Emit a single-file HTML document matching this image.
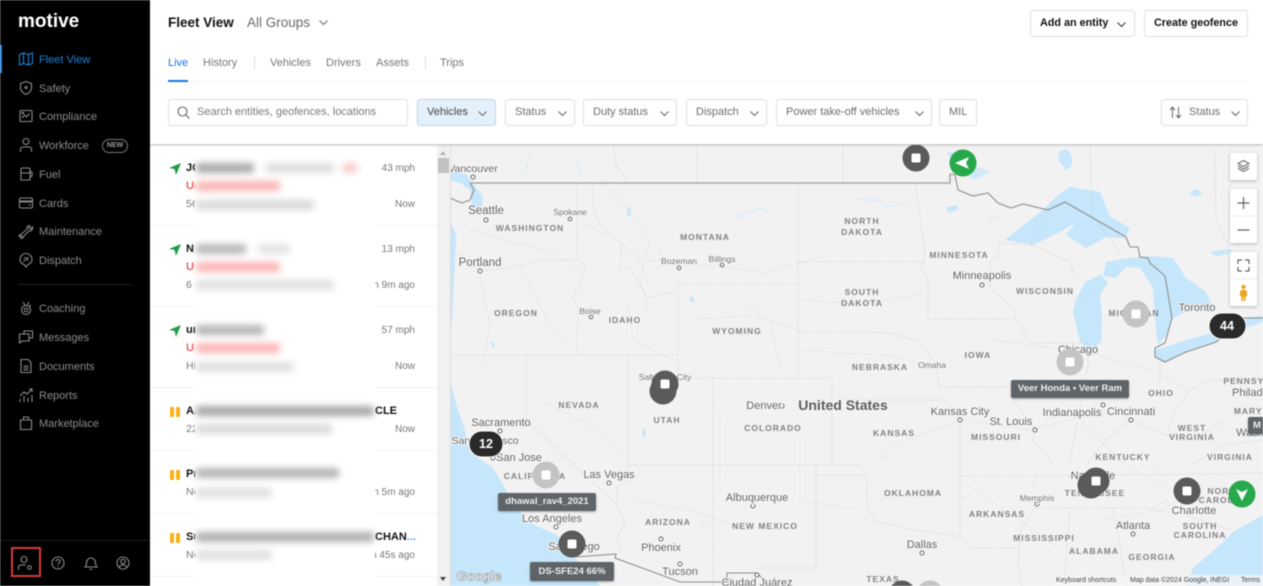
<!DOCTYPE html>
<html><head><meta charset="utf-8"><title>Fleet View</title>
<style>
html,body{margin:0;padding:0;width:1263px;height:586px;overflow:hidden;background:#fff;font-family:"Liberation Sans",sans-serif}
#wrap{position:absolute;left:0;top:0;width:1263px;height:586px;overflow:hidden;filter:blur(.4px)}
.a{position:absolute;white-space:nowrap}
#side{position:absolute;left:0;top:0;width:150px;height:586px;background:#000}
.n{position:absolute;left:39px;margin-top:1px;font-size:11px;line-height:14px;color:#8b8b8b;white-space:nowrap}
.ic{position:absolute;left:18px;width:16px;height:16px;fill:none;stroke:#8b8b8b;stroke-width:1.1}
.btn{position:absolute;top:99px;height:25px;border:1px solid #dcdcdc;border-radius:3px;background:#fff;font-size:11px;line-height:25px;color:#6e6e6e;box-sizing:content-box}
.btn span{position:absolute;left:9px;white-space:nowrap}
.chev{position:absolute;width:9px;height:6px;fill:none;stroke:#666;stroke-width:1}
.tab{position:absolute;top:56px;font-size:11px;line-height:14px;color:#777}
.sep{position:absolute;top:56px;width:1px;height:14px;background:#ddd}
.rs{position:absolute;left:150px;width:287px;height:1px;background:#f2f2f2}
.t{position:absolute;font-size:10.5px;line-height:13px;color:#777;white-space:nowrap}
.b{position:absolute;margin-top:1px;font-size:11px;line-height:13px;font-weight:bold;color:#111;white-space:nowrap}
.r{position:absolute;font-size:11px;line-height:13px;color:#f01818;white-space:nowrap}
.tr{position:absolute;right:848px;font-size:10px;line-height:13px;color:#777;white-space:nowrap}
.bl{position:absolute;height:10px;border-radius:3px;filter:blur(3.5px)}
.p{position:absolute;width:4px;height:10px;background:#fbb017;border-radius:1px}
.arr{position:absolute;left:168px;width:14px;height:14px}
#map text{font-family:"Liberation Sans",sans-serif;dominant-baseline:central;text-anchor:middle}
.c{font-size:11px;fill:#666;paint-order:stroke;stroke:#f6f6f6;stroke-width:2px}
.cs{font-size:8.5px;fill:#747474;paint-order:stroke;stroke:#f6f6f6;stroke-width:2px}
.s{font-size:8.5px;font-weight:bold;fill:#828282;letter-spacing:1px}
.ctl{position:absolute;left:1230px;width:27px;background:#fff;border-radius:2px;box-shadow:0 1px 3px rgba(0,0,0,.25)}
.lb{position:absolute;height:18px;line-height:18px;background:#5f6468;border-radius:2px;color:#eee;font-size:9.5px;font-weight:bold;text-align:center;white-space:nowrap;box-shadow:0 1px 2px rgba(0,0,0,.3)}
</style></head><body><div id="wrap">

<svg id="map" style="position:absolute;left:450px;top:145px" width="813" height="441" viewBox="450 145 813 441">
<rect x="450" y="145" width="813" height="441" fill="#f2f2f2"/>
<g fill="#c5e6fb">
<path d="M450 586V380L458 410 465 430 470 452 493 468 507 492 527 522 557 535 573 557 588 570 600 586Z"/>
<path d="M450 220L456 235 455 260 452 320 450 345Z"/>
<path d="M450 172L466 174 472 183 482 195 483 204 476 214 472 205 470 190 462 184 450 180Z"/>
<path d="M1263 515L1233 532 1220 545 1193 568 1186 586H1263Z"/>
<path d="M1005 240L1020 228 1043 210 1058 195 1070 187 1100 192 1110 217 1130 228 1125 238 1106 237 1086 248 1066 235 1075 223 1060 232 1033 245 1023 243Z"/>
<path d="M1100 275L1085 282 1076 300 1073 312 1080 342 1090 352 1101 342 1102 315 1100 295 1108 282 1100 275Z"/>
<path d="M1106 262L1130 258 1150 256 1173 258 1186 278 1206 292 1213 308 1186 312 1173 318 1166 335 1158 345 1155 320 1153 288 1140 268 1126 267 1116 278 1103 276Z"/>
<path d="M1155 358L1166 362 1186 352 1216 342 1222 334 1212 333 1186 340 1168 346 1155 350Z"/>
<path d="M1216 332L1240 318 1263 316V322L1240 330 1220 338Z"/>
<path d="M962 172L975 180 990 172 972 165Z" opacity=".7"/><path d="M1060 162C1056 155 1060 148 1068 150 1074 158 1074 166 1066 170Z"/>
<path d="M1190 192l8 -3 4 5-8 3z"/><path d="M1210 252l20-3 4 4-18 3z"/><path d="M947 153l6-1 2 4-6 1z"/>
<path d="M946 208l10-3 3 4-10 4z"/><path d="M560 212l1-4 1 6z"/><path d="M627 207l3 0 1 9-4 0z"/>
<path d="M690 296l4 2 1 5-5-2z"/><path d="M643 429l3 0 -1 8-3 0z"/><path d="M491 341l3 2 1 5-3-2z"/>
</g>
<g fill="none" stroke="#d2ecfb" stroke-width="1">
<path d="M530 155l-5 18M577 160l3 16M855 200l18-3 15 10 12-2M735 218l25-10 8 5M660 250l4 12M1000 215l-12 6"/>
<path d="M1090 480l3-8M1150 470l5-5M1050 500l4-6M880 460l6-5M960 500l6-4M700 525l8-4M560 520l4 6"/>
</g>
<g fill="none" stroke="#e9e9e9" stroke-width="1">
<path d="M470 230l40 12 30 6 40 20M578 220l30 15 30 20 10 30M600 180l30 30 20 30-10 40 8 30M648 260l60 5 60 8 30-10 30-8"/>
<path d="M480 275l10 50-8 40M520 265l25 50 20 30M540 400l60 30 40 40M628 300l5 40 40 20M690 320l60-5 50 15M740 300l30 20 10 50"/>
<path d="M800 300l60 4 65-10M800 350l90 6 50 12M860 200l60 4M990 340l80 10M1080 350l70 20 40 20M960 420l70 10 60-15 50-5"/>
<path d="M720 420l0 60M800 440l0 60 60 10M630 500l60 10 60 20M880 450l80-30M960 480l60 40 40 30M1100 520l60-10 40-20M1060 400l60 60 50 30"/>
</g>
<g fill="none" stroke="#cbcbcb" stroke-width="1" stroke-dasharray="1 2">
<path d="M697 145V183M843 145V183M613 145L616 165 627 180M1215 150L1216 220 1230 250"/>
<path d="M577 183V252L579 260 586 268 573 298 578 308 577 355M457 253L480 271 507 268 543 260 579 260"/>
<path d="M593 183V208L600 225 622 243 620 268 630 268 647 298 673 292 678 295M678 284H798M678 284V378M798 183V375"/>
<path d="M453 355H678M526 355V420L617 505 625 522 617 538 620 553M628 355V480L617 487V505M628 465H860M688 378H832V465M713 378V586"/>
<path d="M816 465V568H755M816 475H867V508L878 522 916 530 963 537 970 548H1018M798 262H925M798 332H853L890 333 920 342 935 363 940 387 H1013"/>
<path d="M915 183L925 252 921 270 928 278V319H1016M846 400H946L960 420V535M960 476H1036L1033 485M1048 210L1031 245 1000 243 998 255 990 262V288L1013 308 1016 319 1030 342V343H1088"/>
<path d="M1031 245L1070 262 1076 278M1013 387V398L1035 430 1033 440 1048 457 1053 465M1088 343V365L1084 385 1080 408 1070 462M1088 462L1106 440 1130 420 1166 435M1166 435L1175 410 1190 390 1200 385 1214 380H1263M1160 353V385"/>
<path d="M1036 476L1263 473M1036 508H1153L1168 500M1070 508L1065 578M1113 508L1123 565 1125 586M1036 505L1020 532 1018 565 1022 586M1151 510L1182 514 1231 530M1166 435L1195 440 1210 430 1225 420M1190 465L1225 445 1263 440"/>
<path d="M1090 145l2 70 30 40M1230 145V230l12 20"/>
</g>
<g fill="none" stroke="#8e8e8e" stroke-width="1.1">
<path d="M450 198L462 203 470 200 474 190 470 183"/>
<path d="M1155 348L1165 343 1172 318 1165 276 1150 263 1148 258 1140 257 1138 247 1130 247 1126 237 1065 202 1048 210 1023 204 1011 208 998 203 988 193 973 196 958 190 955 175 950 174"/>
<path d="M1155 348V357L1165 362 1186 352 1216 342 1230 330 1243 318H1263"/>
<path d="M575 557L616 554 615 558 680 582H727V573H757L770 586"/>
</g>
<path d="M470 183H950V174" fill="none" stroke="#a8a8a8" stroke-width="1.6"/>
<g fill="#fff" stroke="#666" stroke-width="1">
<circle cx="473" cy="177" r="2"/><circle cx="486" cy="220" r="2"/><circle cx="570" cy="219" r="1.8"/><circle cx="480" cy="271" r="2"/><circle cx="679" cy="268" r="1.8"/><circle cx="722" cy="265" r="1.8"/><circle cx="591" cy="317" r="1.8"/><circle cx="982" cy="285" r="2"/><circle cx="500" cy="431" r="2"/><circle cx="493" cy="458" r="2"/><circle cx="609" cy="483" r="2"/><circle cx="556" cy="527" r="2"/><circle cx="782" cy="406" r="2"/><circle cx="753" cy="506" r="2"/><circle cx="661" cy="539" r="2"/><circle cx="680" cy="564" r="2"/><circle cx="757" cy="575" r="2"/><circle cx="960" cy="420" r="2"/><circle cx="1035" cy="430" r="2"/><circle cx="1103" cy="405" r="2"/><circle cx="1131" cy="420" r="2"/><circle cx="1037" cy="504" r="2"/><circle cx="1133" cy="534" r="2"/><circle cx="922" cy="553" r="2"/>
</g>
<g class="labels">
<text class="c" x="473" y="169" style="font-size:10.5px">Vancouver</text><text class="c" x="486" y="211" style="font-size:11.5px">Seattle</text><text class="s" x="530" y="228">WASHINGTON</text><text class="cs" x="570" y="212">Spokane</text><text class="c" x="480" y="263" style="font-size:11.5px">Portland</text>
<text class="s" x="705" y="237">MONTANA</text><text class="cs" x="679" y="261">Bozeman</text><text class="cs" x="722" y="259">Billings</text><text class="s" x="516" y="313">OREGON</text><text class="cs" x="590" y="311">Boise</text><text class="s" x="625" y="320">IDAHO</text><text class="s" x="737" y="331">WYOMING</text>
<text class="s" x="862" y="221">NORTH</text><text class="s" x="862" y="232">DAKOTA</text><text class="s" x="862" y="292">SOUTH</text><text class="s" x="862" y="303">DAKOTA</text><text class="s" x="959" y="255">MINNESOTA</text><text class="c" x="982" y="276">Minneapolis</text><text class="s" x="1045" y="291">WISCONSIN</text><text class="s" x="1134" y="313">MICHIGAN</text><text class="s" x="978" y="355">IOWA</text><text class="c" x="1197" y="308">Toronto</text><text class="c" x="1078" y="350">Chicago</text><text class="cs" x="932" y="365">Omaha</text><text class="s" x="880" y="367">NEBRASKA</text>
<text class="cs" x="665" y="377">Salt Lake City</text><text class="s" x="579" y="405">NEVADA</text><text class="c" x="501" y="423">Sacramento</text><text class="c" x="485" y="441" style="font-size:10.5px">San Francisco</text><text class="c" x="519" y="458">San Jose</text><text class="s" x="535" y="476">CALIFORNIA</text><text class="c" x="609" y="475">Las Vegas</text><text class="c" x="552" y="519">Los Angeles</text><text class="c" x="574" y="547">San Diego</text><text class="s" x="667" y="420">UTAH</text><text class="c" x="764" y="406">Denver</text><text x="843" y="405" style="font-size:14px;font-weight:bold;fill:#5f5f5f">United States</text><text class="s" x="773" y="428">COLORADO</text><text class="s" x="668" y="522">ARIZONA</text><text class="s" x="765" y="526">NEW MEXICO</text><text class="c" x="757" y="498">Albuquerque</text><text class="c" x="661" y="548">Phoenix</text><text class="c" x="680" y="572">Tucson</text><text class="c" x="757" y="583">Ciudad Juárez</text>
<text class="s" x="894" y="433">KANSAS</text><text class="c" x="960" y="412">Kansas City</text><text class="c" x="1011" y="422">St. Louis</text><text class="s" x="996" y="437">MISSOURI</text><text class="s" x="1161" y="393">OHIO</text><text class="c" x="1072" y="413">Indianapolis</text><text class="c" x="1131" y="412">Cincinnati</text><text class="s" x="1262" y="381">PENNSYLVANIA</text><text class="c" x="1262" y="393">Philadelphia</text><text class="s" x="1262" y="411">MARYLAND</text><text class="s" x="1192" y="428">WEST</text><text class="s" x="1192" y="437">VIRGINIA</text><text class="c" x="1265" y="433">Washington</text><text class="s" x="1123" y="457">KENTUCKY</text><text class="s" x="1230" y="457">VIRGINIA</text><text class="c" x="1093" y="476">Nashville</text><text class="s" x="1095" y="493">TENNESSEE</text><text class="s" x="1225" y="491">NORTH</text><text class="s" x="1225" y="500">CAROLINA</text><text class="cs" x="1037" y="498">Memphis</text><text class="s" x="997" y="514">ARKANSAS</text><text class="c" x="1194" y="511">Charlotte</text><text class="s" x="1200" y="526">SOUTH</text><text class="s" x="1200" y="535">CAROLINA</text><text class="c" x="1133" y="526">Atlanta</text><text class="s" x="913" y="493">OKLAHOMA</text><text class="s" x="1044" y="538">MISSISSIPPI</text><text class="s" x="1094" y="551">ALABAMA</text><text class="s" x="1152" y="557">GEORGIA</text><text class="c" x="922" y="545">Dallas</text><text class="s" x="883" y="579">TEXAS</text>
</g>
<g>
<circle cx="916" cy="158" r="13.5" fill="#5a5a5a"/><rect x="911.5" y="153.5" width="9" height="9" rx="1.5" fill="#fff"/>
<circle cx="1136" cy="314" r="13.5" fill="#c4c4c4"/><rect x="1131.5" y="309.5" width="9" height="9" rx="1.5" fill="#fff"/>
<circle cx="1070" cy="362" r="13.5" fill="#c4c4c4"/><rect x="1065.5" y="357.5" width="9" height="9" rx="1.5" fill="#fff"/>
<circle cx="663" cy="391" r="13.5" fill="#5a5a5a"/><circle cx="665" cy="384" r="13.5" fill="#5a5a5a"/><rect x="660.5" y="379.5" width="9" height="9" rx="1.5" fill="#fff"/>
<circle cx="546" cy="475" r="13.5" fill="#c4c4c4"/><rect x="541.5" y="470.5" width="9" height="9" rx="1.5" fill="#fff"/>
<circle cx="572" cy="544" r="13.5" fill="#5a5a5a"/><rect x="567.5" y="539.5" width="9" height="9" rx="1.5" fill="#fff"/>
<circle cx="1091" cy="485" r="13.5" fill="#5a5a5a"/><circle cx="1096" cy="481" r="13.5" fill="#5a5a5a"/><rect x="1091.5" y="476.5" width="9" height="9" rx="1.5" fill="#fff"/>
<circle cx="1187" cy="491" r="13.5" fill="#5a5a5a"/><rect x="1182.5" y="486.5" width="9" height="9" rx="1.5" fill="#fff"/>
<circle cx="902" cy="594" r="13.5" fill="#5a5a5a"/><circle cx="930" cy="594" r="13.5" fill="#c4c4c4"/>
<circle cx="963" cy="163" r="13.5" fill="#27a84a"/><path d="M955 163L969 157 966 163 969 169Z" fill="#fff"/>
<circle cx="1242" cy="494" r="13.5" fill="#27a84a"/><path d="M1236 489L1242 492 1248 489 1242 501Z" fill="#fff"/>
<rect x="469" y="431" width="34" height="26" rx="13" fill="#2a2a2a" stroke="#fff" stroke-width="1"/><text x="486" y="444" style="font-size:12.5px;font-weight:bold;fill:#fff">12</text>
<rect x="1209" y="313" width="37" height="26" rx="13" fill="#2a2a2a" stroke="#fff" stroke-width="1"/><text x="1227" y="326" style="font-size:12.5px;font-weight:bold;fill:#fff">44</text>
<text x="479" y="576" style="font-size:13px;font-weight:bold;fill:#fff;stroke:#9a9a9a;stroke-width:.7px">Google</text>
</g>
</svg>

<div class="lb" style="left:1011px;top:380px;width:118px">Veer Honda • Veer Ram</div>
<div class="lb" style="left:498px;top:493px;width:98px">dhawal_rav4_2021</div>
<div class="lb" style="left:530px;top:562px;width:84px;height:19px;line-height:19px">DS-SFE24 66%</div>
<div class="lb" style="left:1248px;top:417px;width:20px;height:17px;line-height:17px;text-align:left;padding-left:5px;box-sizing:border-box">M</div>

<div class="ctl" style="top:153px;height:27px"><svg width="27" height="27" fill="none" stroke="#666" stroke-width="1"><path d="M13.5 7.5l5.5 3-5.5 3-5.5-3zM8 13l5.500 3 5.500-3M8 15.500l5.500 3 5.500-3"/></svg></div>
<div class="ctl" style="top:189px;height:54px"><svg width="27" height="54" fill="none" stroke="#666" stroke-width="1.2"><path d="M7.500 14h12M13.500 8v12M7.500 41h12"/><path d="M0 27h27" stroke="#eee" stroke-width="1"/></svg></div>
<div class="ctl" style="top:252px;height:54px"><svg width="27" height="54" fill="none" stroke="#666" stroke-width="1.2"><path d="M8 12V8h4M15 8h4v4M19 15v4h-4M12 19H8v-4"/><path d="M0 27h27" stroke="#eee" stroke-width="1"/><g fill="#e9a623" stroke="none"><circle cx="13.500" cy="35" r="2.200"/><path d="M10.500 38h6l.8 6h-1.600v5h-1.800v-4h-.8v4h-1.800v-5h-1.600z"/></g></svg></div>

<div class="a" style="left:1053px;top:575px;width:210px;height:11px;background:rgba(245,245,245,.75);font-size:7px;line-height:11px;color:#444">
<span class="a" style="left:3px">Keyboard shortcuts</span><span class="a" style="left:77px">Map data ©2024 Google, INEGI</span><span class="a" style="left:188px">Terms</span></div>

<!-- list -->
<div class="a" style="left:150px;top:145px;width:300px;height:441px;background:#fff"></div>
<div class="rs" style="top:225px"></div><div class="rs" style="top:306px"></div><div class="rs" style="top:387px"></div><div class="rs" style="top:450px"></div><div class="rs" style="top:513px"></div><div class="rs" style="top:576px"></div>
<div class="a" style="left:437px;top:145px;width:13px;height:441px;background:#f1f1f1"></div>
<div class="a" style="left:438px;top:158px;width:11px;height:15px;background:#c1c1c1"></div>
<div class="a" style="left:440px;top:151px;border:3.500px solid transparent;border-bottom:4px solid #b0b0b0;border-top:0"></div>
<div class="a" style="left:440px;top:577px;border:3.500px solid transparent;border-top:4px solid #444;border-bottom:0"></div>
<div class="a" style="left:450px;top:145px;width:1px;height:441px;background:#ddd"></div>

<svg class="arr" style="top:161px" viewBox="168 161 14 14"><path d="M169 168L181 163 176 175 174.500 169Z" fill="#1f9d46"/></svg>
<svg class="arr" style="top:242px" viewBox="168 161 14 14"><path d="M169 168L181 163 176 175 174.500 169Z" fill="#1f9d46"/></svg>
<svg class="arr" style="top:323px" viewBox="168 161 14 14"><path d="M169 168L181 163 176 175 174.500 169Z" fill="#1f9d46"/></svg>
<div class="p" style="left:170px;top:407px"></div><div class="p" style="left:176px;top:407px"></div>
<div class="p" style="left:170px;top:470px"></div><div class="p" style="left:176px;top:470px"></div>
<div class="p" style="left:170px;top:533px"></div><div class="p" style="left:176px;top:533px"></div>

<div class="b" style="left:186px;top:161px">JO</div><div class="r" style="left:186px;top:180px">Un</div><div class="t" style="left:186px;top:198px">56</div>
<div class="b" style="left:186px;top:242px">N</div><div class="r" style="left:186px;top:261px">U</div><div class="t" style="left:186px;top:279px">6</div>
<div class="b" style="left:186px;top:323px">un</div><div class="r" style="left:186px;top:342px">U</div><div class="t" style="left:186px;top:360px">Hi</div>
<div class="b" style="left:186px;top:404px">AA</div><div class="t" style="left:186px;top:423px">22</div>
<div class="b" style="left:186px;top:467px">Pr</div><div class="t" style="left:186px;top:486px">No</div>
<div class="b" style="left:186px;top:530px">Su</div><div class="t" style="left:186px;top:549px">No</div>
<div class="tr" style="top:162px">43 mph</div><div class="tr" style="top:198px">Now</div>
<div class="tr" style="top:243px">13 mph</div><div class="tr" style="top:279px">h 9m ago</div>
<div class="tr" style="top:324px">57 mph</div><div class="tr" style="top:360px">Now</div>
<div class="tr" style="top:423px">Now</div><div class="tr" style="top:486px">h 5m ago</div><div class="tr" style="top:549px">n 45s ago</div>

<div class="a" style="left:195px;top:145px;width:180px;height:441px;background:#fff"></div>
<div class="b" style="left:375px;top:404px">CLE</div>
<div class="b" style="left:375px;top:530px">CHAN<span style="color:#5aa5ea">...</span></div>
<div class="bl" style="left:196px;top:163px;width:58px;background:#aaa"></div><div class="bl" style="left:266px;top:163px;width:68px;background:#dedede"></div><div class="bl" style="left:343px;top:163px;width:14px;background:#f9cccc"></div>
<div class="bl" style="left:196px;top:181px;width:84px;background:#fbb5b5"></div><div class="bl" style="left:196px;top:200px;width:118px;background:#dadada"></div>
<div class="bl" style="left:196px;top:244px;width:50px;background:#b8b8b8"></div><div class="bl" style="left:258px;top:244px;width:32px;background:#e4e4e4"></div>
<div class="bl" style="left:196px;top:262px;width:84px;background:#fbb5b5"></div><div class="bl" style="left:196px;top:280px;width:138px;background:#e0e0e0"></div>
<div class="bl" style="left:196px;top:325px;width:68px;background:#b5b5b5"></div><div class="bl" style="left:196px;top:343px;width:84px;background:#fbb5b5"></div><div class="bl" style="left:196px;top:362px;width:98px;background:#e0e0e0"></div>
<div class="bl" style="left:196px;top:406px;width:178px;background:#a8a8a8"></div><div class="bl" style="left:196px;top:424px;width:136px;background:#dadada"></div>
<div class="bl" style="left:196px;top:468px;width:143px;background:#b5b5b5"></div><div class="bl" style="left:196px;top:488px;width:76px;background:#e0e0e0"></div>
<div class="bl" style="left:196px;top:532px;width:178px;background:#b0b0b0"></div><div class="bl" style="left:196px;top:550px;width:76px;background:#e0e0e0"></div>

<!-- header -->
<div class="a" style="left:150px;top:0;width:1113px;height:144px;background:#fff;box-shadow:0 1px 2px rgba(0,0,0,.3)"></div>
<div class="a" style="left:168px;top:15px;font-size:13.500px;line-height:16px;font-weight:bold;color:#111">Fleet View</div>
<div class="a" style="left:247px;top:15px;font-size:13.500px;line-height:16px;color:#6a6a6a">All Groups</div>
<svg class="chev" style="left:319px;top:20px"><path d="M.5 .5L4.500 4.500 8.500 .5"/></svg>
<div class="tab" style="left:168px;color:#1a73e8">Live</div><div class="tab" style="left:203px">History</div><div class="sep" style="left:254px"></div>
<div class="tab" style="left:270px">Vehicles</div><div class="tab" style="left:326px">Drivers</div><div class="tab" style="left:376px">Assets</div><div class="sep" style="left:425px"></div><div class="tab" style="left:440px">Trips</div>
<div class="a" style="left:168px;top:80.500px;width:1080px;height:1.500px;background:#f0f0f0"></div>
<div class="a" style="left:168px;top:79.500px;width:20px;height:2px;background:#1a73e8"></div>

<div class="btn" style="left:168px;width:238px"><span style="left:28px;color:#7a7a7a">Search entities, geofences, locations</span>
<svg style="position:absolute;left:8px;top:6px" width="13" height="13" fill="none" stroke="#666" stroke-width="1.100"><circle cx="5.500" cy="5.500" r="4.500"/><path d="M9 9l3.500 3.500"/></svg></div>
<div class="btn" style="left:417px;width:77px;background:#e4f1fb;border-color:#bcd5e6"><span style="color:#444">Vehicles</span><svg class="chev" style="left:60px;top:11px"><path d="M.5 .5L4.500 4.500 8.500 .5"/></svg></div>
<div class="btn" style="left:505px;width:68px"><span>Status</span><svg class="chev" style="left:52px;top:11px"><path d="M.5 .5L4.500 4.500 8.500 .5"/></svg></div>
<div class="btn" style="left:583px;width:92px"><span>Duty status</span><svg class="chev" style="left:76px;top:11px"><path d="M.5 .5L4.500 4.500 8.500 .5"/></svg></div>
<div class="btn" style="left:686px;width:79px"><span>Dispatch</span><svg class="chev" style="left:63px;top:11px"><path d="M.5 .5L4.500 4.500 8.500 .5"/></svg></div>
<div class="btn" style="left:776px;width:154px"><span>Power take-off vehicles</span><svg class="chev" style="left:138px;top:11px"><path d="M.5 .5L4.500 4.500 8.500 .5"/></svg></div>
<div class="btn" style="left:939px;width:36px"><span>MIL</span></div>
<div class="btn" style="left:1161px;width:85px"><svg style="position:absolute;left:7px;top:6px" width="13" height="13" fill="none" stroke="#666" stroke-width="1"><path d="M3.500 12V1.500M1 4l2.500-3L6 4M9.500 1v10.500M7 9l2.500 3L12 9"/></svg><span style="left:27px">Status</span><svg class="chev" style="left:69px;top:11px"><path d="M.5 .5L4.500 4.500 8.500 .5"/></svg></div>
<div class="btn" style="left:1030px;top:10px;width:103px;color:#111;font-weight:bold;font-size:10.800px"><span>Add an entity</span><svg class="chev" style="left:86px;top:11px;stroke:#333"><path d="M.5 .5L4.500 4.500 8.500 .5"/></svg></div>
<div class="btn" style="left:1144px;top:10px;width:102px;color:#111;font-weight:bold;font-size:10.800px"><span>Create geofence</span></div>

<!-- sidebar -->
<div id="side">
<div class="a" style="left:18px;top:11px;font-size:19px;line-height:22px;font-weight:bold;color:#fff">motive</div>
<div class="a" style="left:0;top:45px;width:2px;height:28px;background:#1b80dc"></div>

<svg class="ic" style="top:51px;stroke:#1b80dc" viewBox="0 0 16 16"><path d="M1.500 3.500l4-1.500 5 1.500 4-1.500v10.500l-4 1.500-5-1.500-4 1.500zM5.500 2v10.500M10.500 3.500v10"/></svg>
<div class="n" style="top:52px;color:#1b80dc">Fleet View</div>
<svg class="ic" style="top:80px" viewBox="0 0 16 16"><path d="M8 1.500l5.500 2v4.500c0 3-2.500 5-5.500 6.500-3-1.500-5.500-3.500-5.500-6.500V3.500z"/><circle cx="8" cy="7.500" r="1"/></svg>
<div class="n" style="top:81px">Safety</div>
<svg class="ic" style="top:108px" viewBox="0 0 16 16"><rect x="2" y="2.500" width="12" height="11" rx="1"/><path d="M4 10l2.500-3 2 2 3-3.500"/><rect x="3.500" y="4" width="2.500" height="2" fill="#8b8b8b" stroke="none"/></svg>
<div class="n" style="top:109px">Compliance</div>
<svg class="ic" style="top:137px" viewBox="0 0 16 16"><circle cx="8" cy="4.500" r="3"/><path d="M2.500 15v-2.500c0-1.500 1-2.500 2.500-2.500h6c1.500 0 2.500 1 2.500 2.500V15"/></svg>
<div class="n" style="top:138px">Workforce</div>
<div class="a" style="left:102px;top:139px;width:24px;height:12px;border:1px solid #777;border-radius:7px;color:#999;font-size:7px;font-weight:bold;line-height:12px;text-align:center">NEW</div>
<svg class="ic" style="top:166px" viewBox="0 0 16 16"><path d="M3 14V3.500C3 2.500 3.500 2 4.500 2h6c1 0 1.500.5 1.500 1.500V14zM3 7h9M12 5l2 1.500V10l-2 1"/></svg>
<div class="n" style="top:167px">Fuel</div>
<svg class="ic" style="top:195px" viewBox="0 0 16 16"><rect x="1.500" y="3" width="13" height="10" rx="1.500"/><path d="M1.500 6.500h13" stroke-width="2"/><path d="M10.500 10h2"/></svg>
<div class="n" style="top:196px">Cards</div>
<svg class="ic" style="top:224px" viewBox="0 0 16 16"><path d="M14.500 3l-2 2-1.500-1 1-2.200C10 1 8.500 3 9.200 5L3 10.500c-1.500 0-2 1-1.800 2l1.800-1 1 1.300-1.300 1.400c1.500.5 3-.5 3-2L11 7c2 .5 4-1.500 3.500-4z"/></svg>
<div class="n" style="top:224px">Maintenance</div>
<svg class="ic" style="top:252px" viewBox="0 0 16 16"><path d="M8 15l-2-2.500C3.500 11.500 2 9.500 2 7.500a6 6 0 0 1 12 0c0 2-1.500 4-4 5z"/><path d="M5.500 9.500L10.500 5M6 5.500l2 .5M10 9l-.5-2"/></svg>
<div class="n" style="top:253px">Dispatch</div>
<div class="a" style="left:18px;top:284px;width:114px;height:1px;background:#222"></div>
<svg class="ic" style="top:300px" viewBox="0 0 16 16"><circle cx="8" cy="10" r="4.500"/><circle cx="8" cy="10" r="1.800"/><path d="M5 2l2.500 4M9 5l2-3M11 6l2-1"/></svg>
<div class="n" style="top:301px">Coaching</div>
<svg class="ic" style="top:329px" viewBox="0 0 16 16"><path d="M6 5V2h8.500v7H11M1.500 5H11v7H4l-2.500 2z"/></svg>
<div class="n" style="top:330px">Messages</div>
<svg class="ic" style="top:358px" viewBox="0 0 16 16"><path d="M3 1.500h7l3 3v10H3zM5.500 8h5M5.500 10h5M5.500 12h5"/></svg>
<div class="n" style="top:359px">Documents</div>
<svg class="ic" style="top:387px" viewBox="0 0 16 16"><path d="M2 15v-3M6 15V9M10 15v-4M14 15V8M2 9l4-4 3 2 5-5M11 2h3v3"/></svg>
<div class="n" style="top:388px">Reports</div>
<svg class="ic" style="top:415px" viewBox="0 0 16 16"><path d="M2.500 5h11v9.500h-11zM5.500 5V2h5v3"/></svg>
<div class="n" style="top:416px">Marketplace</div>

<div class="a" style="left:0;top:540px;width:150px;height:1px;background:#1e1e1e"></div>
<div class="a" style="left:11px;top:547px;width:26px;height:26px;border:2px solid #d63a3a"></div>
<svg class="ic" style="left:17px;top:555px" viewBox="0 0 16 16"><circle cx="7" cy="4.500" r="3"/><path d="M1.500 15v-2.500C1.500 11 2.500 10 4 10h5"/><circle cx="12.500" cy="12.500" r="1.800"/></svg>
<svg class="ic" style="left:50px;top:555px" viewBox="0 0 16 16"><circle cx="8" cy="8" r="6"/><path d="M6 6.500C6 5 7 4.500 8 4.500c1.200 0 2 .8 2 1.800 0 1.500-2 1.500-2 3.200M8 11v1"/></svg>
<svg class="ic" style="left:83px;top:555px" viewBox="0 0 16 16"><path d="M2 12c1.200-1 1.500-2 1.500-4 0-3 2-5 4.500-5s4.500 2 4.500 5c0 2 .3 3 1.500 4zM6.500 14c.5.500 2.500.500 3 0"/></svg>
<svg class="ic" style="left:115px;top:555px" viewBox="0 0 16 16"><circle cx="8" cy="8" r="6"/><circle cx="8" cy="6.500" r="2.200"/><path d="M4 12.500c.8-1.800 2-2.500 4-2.500s3.200.7 4 2.500"/></svg>
</div>
</div></body></html>
